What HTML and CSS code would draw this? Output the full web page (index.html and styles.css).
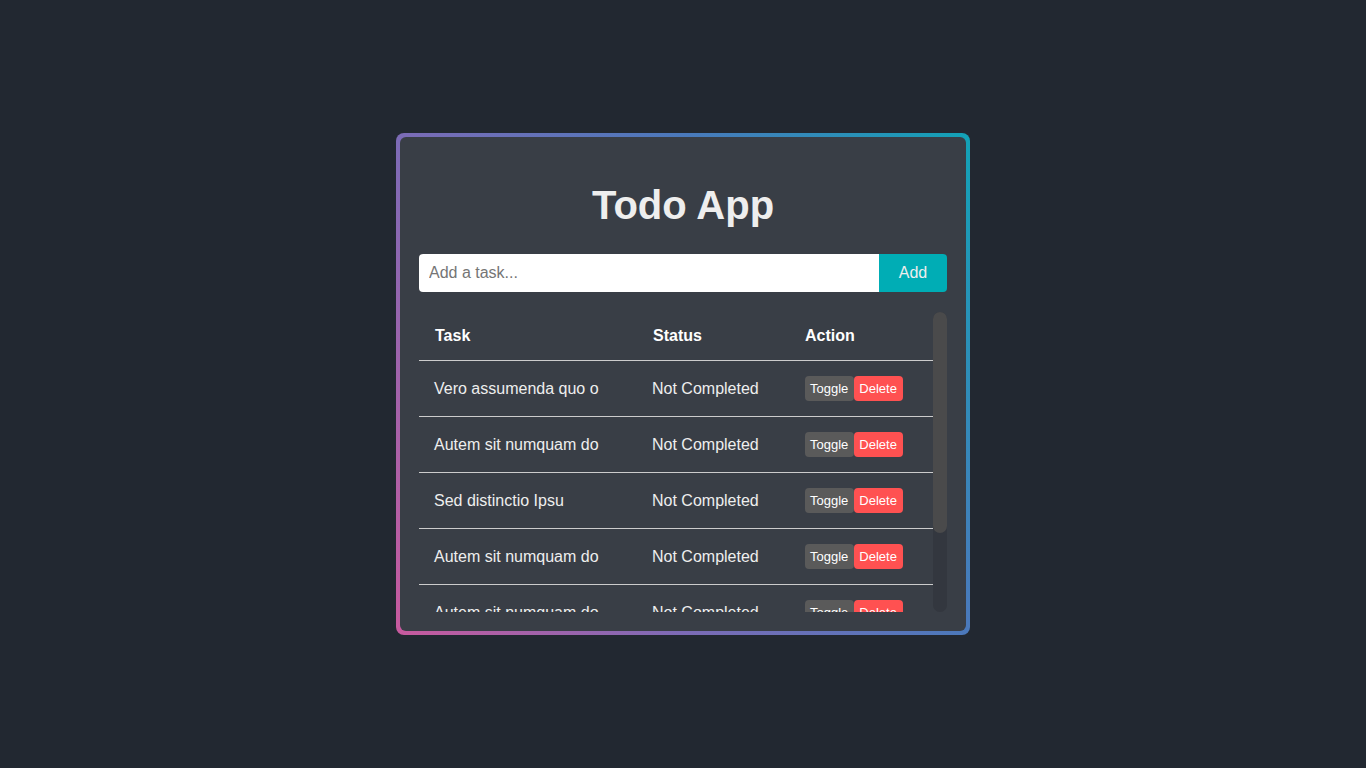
FILE: index.html
```html
<!DOCTYPE html>
<html lang="en">
<head>
<meta charset="utf-8">
<title>Todo App</title>
<link rel="stylesheet" href="styles.css">
</head>
<body>
<div class="frame">
  <div class="card">
    <h1 class="title">Todo App</h1>
    <form class="add-form" onsubmit="return false">
      <input class="add-input" type="text" placeholder="Add a task...">
      <button class="add-btn" type="submit">Add</button>
    </form>
    <div class="list-box">
      <div class="list-wrap">
        <table class="tasks">
          <colgroup>
            <col class="c-task">
            <col class="c-status">
            <col class="c-action">
          </colgroup>
          <thead>
            <tr><th>Task</th><th>Status</th><th>Action</th></tr>
          </thead>
          <tbody>
            <tr><td>Vero assumenda quo o</td><td>Not Completed</td><td><button class="btn btn-toggle">Toggle</button><button class="btn btn-delete">Delete</button></td></tr>
            <tr><td>Autem sit numquam do</td><td>Not Completed</td><td><button class="btn btn-toggle">Toggle</button><button class="btn btn-delete">Delete</button></td></tr>
            <tr><td>Sed distinctio Ipsu</td><td>Not Completed</td><td><button class="btn btn-toggle">Toggle</button><button class="btn btn-delete">Delete</button></td></tr>
            <tr><td>Autem sit numquam do</td><td>Not Completed</td><td><button class="btn btn-toggle">Toggle</button><button class="btn btn-delete">Delete</button></td></tr>
            <tr><td>Autem sit numquam do</td><td>Not Completed</td><td><button class="btn btn-toggle">Toggle</button><button class="btn btn-delete">Delete</button></td></tr>
            <tr><td>Vero assumenda quo o</td><td>Not Completed</td><td><button class="btn btn-toggle">Toggle</button><button class="btn btn-delete">Delete</button></td></tr>
          </tbody>
        </table>
      </div>
      <div class="scroll-track"><div class="scroll-thumb"></div></div>
    </div>
  </div>
</div>
</body>
</html>
```
FILE: styles.css
```css
* { box-sizing: border-box; }

html, body {
  margin: 0;
  padding: 0;
}

body {
  min-height: 100vh;
  background: #222831;
  font-family: "Liberation Sans", Arial, sans-serif;
  color: #eeeeee;
  display: flex;
  align-items: center;
  justify-content: center;
}

.frame {
  width: 574px;
  padding: 4px;
  border-radius: 8px;
  background: linear-gradient(60deg, #c85a9e 0%, #7d6bb6 33%, #4a79bb 67%, #12a2b6 100%);
}

.card {
  background: #393e46;
  border-radius: 6px;
  padding: 20px 19px 19px;
}

.title {
  margin: 25px 0 26px;
  font-size: 40px;
  line-height: 46px;
  font-weight: bold;
  text-align: center;
  color: #eeeeee;
}

.add-form {
  display: flex;
  margin: 0 0 20px;
}

.add-input {
  flex: 1;
  height: 38px;
  border: none;
  outline: none;
  padding: 10px;
  font-family: inherit;
  font-size: 16px;
  color: #222;
  background: #ffffff;
  border-radius: 4px 0 0 4px;
}

.add-input::placeholder { color: #757575; }

.add-btn {
  width: 68px;
  height: 38px;
  border: none;
  padding: 0;
  font-family: inherit;
  font-size: 16px;
  color: #eeeeee;
  background: #00adb5;
  border-radius: 0 4px 4px 0;
  cursor: pointer;
}

.list-box {
  display: flex;
  height: 300px;
}

.list-wrap {
  flex: 1;
  overflow: hidden;
}

.scroll-track {
  width: 14px;
  flex: none;
  background: #33373f;
  border-radius: 7px;
}

.scroll-thumb {
  height: 221px;
  background: #4a4a4b;
  border-radius: 7px;
}

.tasks {
  width: 514px;
  border-collapse: collapse;
  table-layout: fixed;
}

.c-task { width: 218px; }
.c-status { width: 153px; }
.c-action { width: 143px; }

.tasks th,
.tasks td {
  padding: 15px;
  text-align: left;
  font-size: 16px;
  line-height: 18px;
  border-bottom: 1px solid #cccccc;
  white-space: nowrap;
  overflow: hidden;
  vertical-align: middle;
}

.tasks th {
  font-weight: bold;
  color: #ffffff;
  padding-left: 16px;
}

.tasks th:last-child { padding-left: 15px; }

.tasks td { color: #eeeeee; }

.btn {
  border: none;
  margin: 0;
  padding: 5px 6px 5px 5px;
  font-family: inherit;
  font-size: 13px;
  line-height: 15px;
  color: #ffffff;
  border-radius: 4px;
  vertical-align: middle;
  cursor: pointer;
}

.btn-toggle { background: #5a5a5a; }
.btn-delete { background: #ff5151; padding-right: 6px; }
```
